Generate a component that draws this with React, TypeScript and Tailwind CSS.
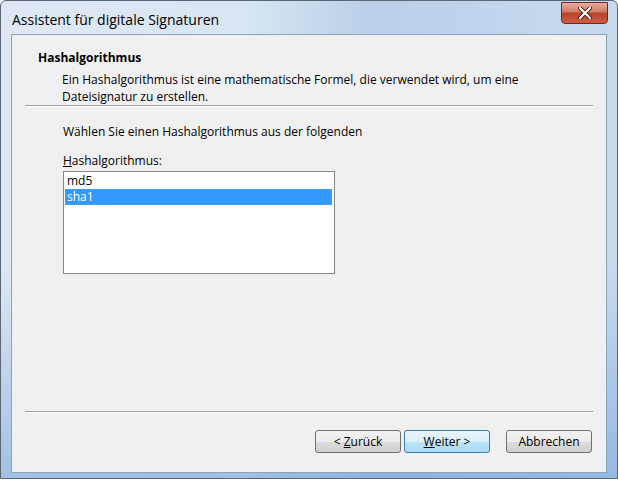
import type { ReactNode } from 'react'

const font = { fontFamily: '"Segoe UI", "Open Sans", "Noto Sans", sans-serif' }

function Button({ children, primary }: { children: ReactNode; primary?: boolean }) {
  return (
    <button
      className={`w-[86px] h-[23px] rounded-[3px] border text-[12px] text-black leading-none flex items-center justify-center ${
        primary
          ? 'border-[#3c7fb1] bg-[linear-gradient(#eaf6fd_0%,#d9f0fc_50%,#bee6fd_51%,#a7d9f5_100%)]'
          : 'border-[#707070] bg-[linear-gradient(#f2f2f2_0%,#ebebeb_50%,#dddddd_51%,#cfcfcf_100%)]'
      }`}
    >
      {children}
    </button>
  )
}

export default function App() {
  return (
    <div className="w-[618px] h-[480px] bg-white" style={font}>
      <div className="w-[618px] h-[479px] rounded-t-[6px] border border-[#5b6775] bg-[linear-gradient(180deg,rgba(255,255,255,0)_0%,rgba(255,255,255,0)_55%,rgba(90,145,210,0.45)_100%),linear-gradient(90deg,#dfe8f2_0%,#d8e5f2_40%,#b9d0e8_60%,#c7dbef_100%)] flex flex-col">
        {/* title bar */}
        <div className="h-[33px] flex items-start justify-between pl-[11px] pr-[9px]">
          <span className="mt-[8px] text-[14px] text-black">Assistent für digitale Signaturen</span>
          <div className="mt-[1px] w-[47px] h-[22px] rounded-b-[4px] border border-[#6d2a22] bg-[linear-gradient(#e9aa9a_0%,#d27a66_45%,#b8442a_50%,#cc5d42_100%)] flex items-center justify-center">
            <svg width="14" height="12" viewBox="0 0 14 12">
              <path d="M2 1 L12 11 M12 1 L2 11" stroke="#4a1a12" strokeWidth="4" strokeLinecap="round" />
              <path d="M2 1 L12 11 M12 1 L2 11" stroke="#ffffff" strokeWidth="2.2" strokeLinecap="round" />
            </svg>
          </div>
        </div>

        {/* client area */}
        <div className="flex-1 mx-[10px] mb-[5px] border border-[#8ea2b9] bg-[#f0f0f0] flex flex-col text-[12px] text-black">
          <div className="pt-[15px] pl-[26px]">
            <div className="font-bold leading-[16px]">Hashalgorithmus</div>
            <div className="mt-[5px] pl-[24px] leading-[17px]">
              Ein Hashalgorithmus ist eine mathematische Formel, die verwendet wird, um eine
              <br />
              Dateisignatur zu erstellen.
            </div>
          </div>
          <div className="mt-[0px] mx-[13px] h-[2px] border-t border-[#a0a0a0] border-b border-b-white" />

          <div className="pl-[51px] pt-[17px]">
            <div className="leading-[16px]">Wählen Sie einen Hashalgorithmus aus der folgenden</div>
            <div className="mt-[13px] leading-[16px]">
              <span className="underline">H</span>ashalgorithmus:
            </div>
            <div className="mt-[2px] w-[272px] h-[103px] border border-[#828790] bg-white p-[1px] pr-[2px]">
              <div className="h-[16px] leading-[16px] pl-[2px]">md5</div>
              <div className="h-[16px] leading-[16px] pl-[2px] bg-[#3399ff] text-white outline-1 outline-dotted outline-[#d08a3c] -outline-offset-1">
                sha1
              </div>
            </div>
          </div>

          <div className="flex-1" />
          <div className="mx-[13px] h-[2px] border-t border-[#a0a0a0] border-b border-b-white" />
          <div className="h-[59px] flex items-start justify-end pr-[14px] pt-[17px]">
            <Button>
              &lt; <span className="underline ml-[3px]">Z</span>urück
            </Button>
            <div className="ml-[3px]">
              <Button primary>
                <span className="underline">W</span>eiter &gt;
              </Button>
            </div>
            <div className="ml-[16px]">
              <Button>Abbrechen</Button>
            </div>
          </div>
        </div>
      </div>
    </div>
  )
}
